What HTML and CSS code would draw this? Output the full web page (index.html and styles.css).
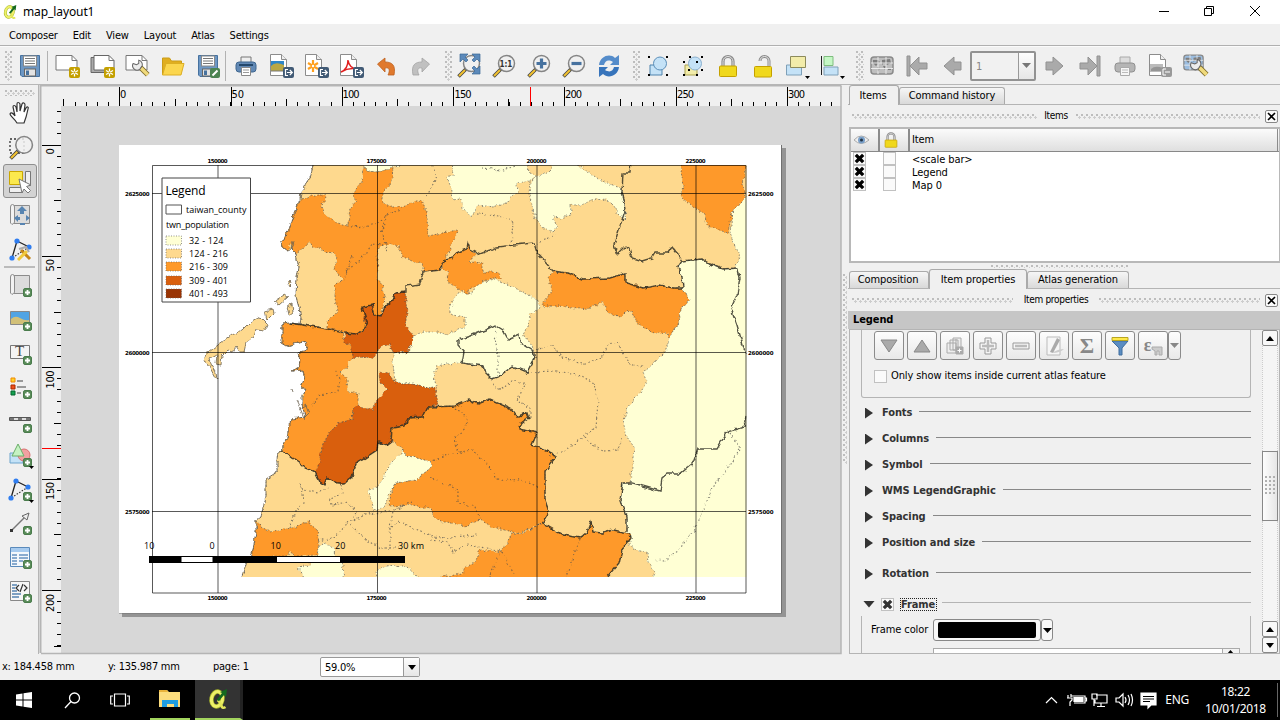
FILE: index.html
```html
<!DOCTYPE html>
<html lang="en">
<head>
<meta charset="utf-8">
<title>map_layout1</title>
<link rel="stylesheet" href="styles.css">
</head>
<body>
<svg class="defs" width="0" height="0">
  <defs>
    <symbol id="plus" viewBox="0 0 9 9"><rect x=".5" y=".5" width="8" height="8" rx="1.5" fill="#5a8c5a" stroke="#4a7c4c"/><path d="M4.5 2v5M2 4.5h5" stroke="#fff" stroke-width="1.8"/></symbol>
    <symbol id="star" viewBox="0 0 11 11"><rect width="11" height="11" rx="2" fill="#c4a000"/><path d="M5.5 1.5v8M2 3.5l7 4M9 3.5l-7 4" stroke="#fff" stroke-width="1.3"/><circle cx="5.500" cy="5.500" r="1" fill="#c4a000"/></symbol>
    <symbol id="export" viewBox="0 0 11 11"><rect width="11" height="11" rx="2" fill="#415a75"/><path d="M5 2.500H2.500v6H5M4 5.500h5M6.800 3l2.500 2.500L6.800 8" fill="none" stroke="#fff" stroke-width="1.200"/></symbol>
    <symbol id="sheet" viewBox="0 0 17 22"><path d="M.5.5h11l5 5v16H.5z" fill="#fff" stroke="#8c8c8c"/><path d="M11.500.5v5h5" fill="#eee" stroke="#8c8c8c"/></symbol>
    <symbol id="floppy" viewBox="0 0 20 22"><path d="M.5.5h19v21H2L.5 20z" fill="#6d97c4" stroke="#47729f"/><rect x="3.500" y="1" width="13" height="10" fill="#fff" stroke="#888"/><path d="M5 3.500h10M5 6h10M5 8.500h10" stroke="#777"/><rect x="4.500" y="14" width="11" height="7" fill="#e3e3e3" stroke="#666"/><rect x="6" y="15.500" width="3" height="4.500" fill="#47729f"/></symbol>
    <symbol id="glass" viewBox="0 0 24 24"><path d="M9 15L1.500 22.500" stroke="#444" stroke-width="3.500"/><path d="M8 16l-6 6" stroke="#f2c230" stroke-width="2"/><circle cx="14.500" cy="9.500" r="8" fill="#f0f0f0" fill-opacity=".85" stroke="#858585" stroke-width="1.500"/></symbol>
    <symbol id="padlock" viewBox="0 0 20 23"><path d="M5 12V7a5 5 0 0110 0v5" fill="none" stroke="#8a8a8a" stroke-width="3.200"/><path d="M5 12V7a5 5 0 0110 0v5" fill="none" stroke="#e2e2e2"/><rect x="1.500" y="11.500" width="17" height="10.500" rx="1" fill="#f0d81c" stroke="#c4a000"/></symbol>
    <symbol id="world" viewBox="0 0 24 19"><rect x="1" y="1" width="22" height="17" rx="3" stroke="#8a8a8a" stroke-width="1.500"/><path d="M3 4h5l2 2-4 4-3-3zM7 11l3 1-2 4zM12 4l8-1 1 4-4 2-3-2-2 2zM13 10l3 0-1 4zM18 12h3v2h-3z" fill="#7d7d7d"/><path d="M8 1v17M16 1v17M1 7h22M1 12.500h22" stroke="#f0f0f0" stroke-width=".9"/></symbol>
    <symbol id="wrench" viewBox="0 0 16 16"><path d="M7 7l7 7" stroke="#7d6b2c" stroke-width="4.500"/><path d="M8 8l6 6" stroke="#f0da7c" stroke-width="3"/><path d="M1 4l3 1 2-1 0-3a4 4 0 013 5l-2 3a4 4 0 01-6-5z" fill="#ececec" stroke="#666" stroke-width=".9"/></symbol>
    <symbol id="nodes" viewBox="0 0 24 24"><path d="M9 4L4 21M9 4l12 6" stroke="#222" stroke-width="1.300"/><path d="M21 10L4 21" stroke="#333" stroke-width="1.200" stroke-dasharray="1.500 1.500"/><g fill="#2f7df0"><circle cx="9" cy="4" r="2.600"/><circle cx="21" cy="10" r="2.600"/><circle cx="4" cy="21" r="2.600"/></g></symbol>
    <symbol id="scroll" viewBox="0 0 20 21"><path d="M4 1.500h15.500v18H4z" fill="#dcdcdc" stroke="#8c8c8c"/><path d="M.5 3q0-2.500 2-2.500t2 2.500v15.500L2 20.500.5 19z" fill="#f2f2f2" stroke="#8c8c8c"/></symbol>
    <symbol id="qgis" viewBox="0 0 20 22"><ellipse cx="9" cy="11" rx="5.500" ry="7.500" transform="rotate(12 9 11)" fill="none" stroke="#a9b82c" stroke-width="4.400"/><ellipse cx="9" cy="11" rx="5.500" ry="7.500" transform="rotate(12 9 11)" fill="none" stroke="#eef06a" stroke-width="3"/><path d="M9.500 12q3 2 4 6 1 3 4 1" fill="none" stroke="#e2e65a" stroke-width="2.600"/><path d="M8.500 12L14 5l-2-1 7-3-1 8-2-2-5 6z" fill="#14691f"/></symbol>
    <symbol id="arrow" viewBox="0 0 20 20"><path d="M.8 7h8V1.500L18 10 8.800 18.500V13h-8z" fill="#aaa" stroke="#8e8e8e"/></symbol>
    <symbol id="cross" viewBox="0 0 12 12"><path d="M2 2l8 8M10 2l-8 8" stroke="currentColor" stroke-width="3.600"/></symbol>
    <filter id="coast" x="0" y="0" width="100%" height="100%"><feTurbulence type="fractalNoise" baseFrequency=".17" numOctaves="2" seed="4"/><feDisplacementMap in="SourceGraphic" scale="5" xChannelSelector="R" yChannelSelector="G"/></filter>
    <clipPath id="mapclip"><rect x="153" y="165" width="593.500" height="412"/></clipPath>
  </defs>
</svg>

<header class="titlebar">
  <svg class="appicon" width="14" height="16" viewBox="0 0 20 22"><use href="#qgis"/></svg>
  <span class="wintitle">map_layout1</span>
  <svg class="winbtns" width="130" height="24" fill="none" stroke="#000"><path d="M1 11.500h10"/><path d="M46.500 8.500h7v7h-7zM48.500 8.500v-2h7v7h-2"/><path d="M92 6l10 10M102 6L92 16"/></svg>
</header>
<nav class="menubar"><span>Composer</span><span>Edit</span><span>View</span><span>Layout</span><span>Atlas</span><span>Settings</span></nav>

<div class="toolbar">
  <i class="grip"></i>
  <b class="tool"><svg width="24" height="24"><use href="#floppy" x="2" y="1" width="20" height="22"/></svg></b>
  <i class="sep"></i>
  <b class="tool"><svg width="26" height="26"><path d="M1 2.500h16l5 5V17H1z" fill="#fff" stroke="#777"/><path d="M17 2.500v5h5" fill="none" stroke="#777"/><use href="#star" x="14" y="14" width="11" height="11"/></svg></b>
  <b class="tool"><svg width="26" height="26"><path d="M1 4.500h15v15H1z" fill="#aaa" stroke="#666"/><path d="M4 2.500h15l5 5V17H4z" fill="#fff" stroke="#666"/><path d="M19 2.500v5h5" fill="none" stroke="#777"/><use href="#star" x="14" y="14" width="11" height="11"/></svg></b>
  <b class="tool"><svg width="26" height="26"><path d="M1 2.500h16l5 5V17H1z" fill="#fff" stroke="#777"/><path d="M17 2.500v5h5" fill="none" stroke="#777"/><use href="#wrench" x="7" y="6" width="18" height="18"/></svg></b>
  <b class="tool"><svg width="24" height="24"><path d="M1.500 21V4h7l2 3h10v4" fill="#e0ae20" stroke="#cb9c17"/><path d="M1.500 21L5 9.500h18L20 21z" fill="#fbd64e" stroke="#dcae22"/></svg></b>
  <b class="tool"><svg width="24" height="24"><use href="#floppy" x="2" y="1" width="20" height="22"/><rect x="14" y="14" width="10" height="10" rx="2" fill="#4c8452"/><path d="M16.500 21.500l5-5" stroke="#fff" stroke-width="2"/></svg></b>
  <i class="sep"></i>
  <b class="tool"><svg width="24" height="24"><path d="M7 3h10v7H7z" fill="#eee" stroke="#777"/><rect x="2" y="8" width="20" height="10" rx="3" fill="#6289b5" stroke="#3f668f"/><path d="M5 11h14" stroke="#24486c" stroke-width="2"/><path d="M7.500 13.500h9v8h-9z" fill="#fff" stroke="#888"/><path d="M9 16h6M9 18.500h6" stroke="#999"/></svg></b>
  <b class="tool"><svg width="26" height="26"><use href="#sheet" x="2" y="1" width="17" height="22"/><path d="M3 8h13v7H3z" fill="#2d86c8"/><path d="M3 13q4-5 13-1v6H3z" fill="#b9a743"/><path d="M3 18h13" stroke="#777"/><use href="#export" x="15" y="14" width="11" height="11"/></svg></b>
  <b class="tool"><svg width="26" height="26"><use href="#sheet" x="2" y="1" width="17" height="22"/><path d="M10 7v12M5 10l10 6M15 10L5 16" stroke="#ffa01e" stroke-width="2.200"/><circle cx="10" cy="13" r="1.200" fill="#fff"/><use href="#export" x="15" y="14" width="11" height="11"/></svg></b>
  <b class="tool"><svg width="26" height="26"><use href="#sheet" x="2" y="1" width="17" height="22"/><path d="M3 19Q10 16 10 7q1 8 9 9-8-2-16 3z" fill="none" stroke="#e02020" stroke-width="1.500"/><use href="#export" x="15" y="14" width="11" height="11"/></svg></b>
  <b class="tool"><svg width="24" height="24"><path d="M3.500 10L11 4v4c7 0 11 3 9 13h-6c2-4 2-8-3-7v4z" fill="#e0792d" stroke="#bd611e" stroke-width=".8"/></svg></b>
  <b class="tool"><svg width="24" height="24"><path d="M20.500 10L13 4v4C6 8 2 11 4 21h6c-2-4-2-8 3-7v4z" fill="#c0c0c0" stroke="#a2a2a2" stroke-width=".8"/></svg></b>
  <i class="grip g2"></i>
  <b class="tool"><svg width="26" height="26"><use href="#glass" x="1" y="1" width="24" height="24"/><path d="M4 1h8l-3 3 3 3-2 2-3-3-3 3zM24 1v8l-3-3-3 3-2-2 3-3-3-3zM24 21h-8l3-3-3-3 2-2 3 3 3-3z" fill="#5c8abb" stroke="#3a6797" stroke-width=".7"/></svg></b>
  <b class="tool"><svg width="24" height="24"><use href="#glass" width="24" height="24"/><text class="one" x="7.500" y="13">1:1</text></svg></b>
  <b class="tool"><svg width="24" height="24"><use href="#glass" width="24" height="24"/><path d="M14.500 4.500v10M9.500 9.500h10" stroke="#47729f" stroke-width="3.200"/></svg></b>
  <b class="tool"><svg width="24" height="24"><use href="#glass" width="24" height="24"/><path d="M9.500 9.500h10" stroke="#47729f" stroke-width="3.200"/></svg></b>
  <b class="tool"><svg width="24" height="24"><path d="M2 11C3 2 13-1 18 4l4-3v10H13l3-3C11 5 8 7 7 11z" fill="#558cca"/><path d="M22 13c-1 9-11 12-16 7l-4 3V13h9l-3 3c5 3 8 1 9-3z" fill="#3774bb"/></svg></b>
  <i class="grip g3"></i>
  <b class="tool"><svg width="24" height="24"><path d="M4 11h12v10H4z" fill="#c4e2f7" stroke="#4f83ad"/><circle cx="14" cy="9.500" r="6.500" fill="#c4e2f7" stroke="#5b8fb9"/><path d="M2 2h2v2H2zM20 2h2v2h-2zM2 20h2v2H2zM20 20h2v2h-2z"/></svg></b>
  <b class="tool"><svg width="24" height="24"><path d="M4 11h12v10H4z" fill="#f2ecaa" stroke="#aaa24e"/><circle cx="14" cy="9.500" r="6.500" fill="#c4e2f7" stroke="#8ab0cf"/><path d="M2 7h2v2H2zM8 2h2v2H8zM20 2h2v2h-2zM2 20h2v2H2zM15 20h2v2h-2zM20 15h2v2h-2zM7 15h2v2H7zM15 7h2v2h-2z"/></svg></b>
  <b class="tool"><svg width="24" height="24"><use href="#padlock" x="2" y="0" width="20" height="24"/></svg></b>
  <b class="tool"><svg width="24" height="24"><path d="M9 7a4.500 4.500 0 019 0v5" fill="none" stroke="#8a8a8a" stroke-width="3"/><path d="M9 7a4.500 4.500 0 019 0v5" fill="none" stroke="#e8e8e8"/><rect x="3.500" y="12.500" width="17" height="10.500" rx="1" fill="#f0d81c" stroke="#c4a000"/></svg></b>
  <b class="tool"><svg width="26" height="26"><path d="M1.500 12h15v10h-15z" fill="#c4e2f7" stroke="#7ea0b8"/><path d="M5.500 3.500h15v11h-15z" fill="#f2ecaa" stroke="#8c8a5b"/><path d="M20 23h5l-2.500 3z"/></svg></b>
  <b class="tool"><svg width="26" height="26"><path d="M1.500 3v19" stroke="#222"/><path d="M4 3.500h9v9H4z" fill="#c5f7c5" stroke="#7fbd7f"/><path d="M4 14h14v8H4z" fill="#c4e2f7" stroke="#7ea0b8"/><path d="M20 23h5l-2.500 3z"/></svg></b>
  <i class="grip g4"></i>
  <b class="tool"><svg width="24" height="24" fill="#bebebe"><use href="#world" y="2" width="24" height="19"/></svg></b>
  <b class="tool"><svg width="24" height="24"><path d="M2 2h3v20H2z" fill="#aaa" stroke="#919191"/><path d="M22 9h-8V3L5 12l9 9v-6h8z" fill="#aaa" stroke="#919191"/></svg></b>
  <b class="tool"><svg width="24" height="24"><path d="M21 8h-7V3L4 12l10 9v-5h7z" fill="#aaa" stroke="#919191"/></svg></b>
  <div class="combo pagecombo"><span>1</span><i><svg width="9" height="5"><path d="M0 0h9L4.500 5z" fill="#777"/></svg></i></div>
  <b class="tool"><svg width="24" height="24"><path d="M3 8h7V3l10 9-10 9v-5H3z" fill="#aaa" stroke="#919191"/></svg></b>
  <b class="tool"><svg width="24" height="24"><path d="M19 2h3v20h-3z" fill="#aaa" stroke="#919191"/><path d="M2 9h8V3l9 9-9 9v-6H2z" fill="#aaa" stroke="#919191"/></svg></b>
  <b class="tool"><svg width="24" height="24"><path d="M7 3h10v7H7z" fill="#ddd" stroke="#aaa"/><rect x="2" y="9" width="20" height="9" rx="3" fill="#b5b5b5" stroke="#909090"/><path d="M7.500 13.500h9v8h-9z" fill="#f6f6f6" stroke="#aaa"/><path d="M9 16h6M9 18.500h6" stroke="#bbb"/></svg></b>
  <b class="tool"><svg width="26" height="26"><use href="#sheet" x="2" y="1" width="17" height="22"/><path d="M3 11h13v8H3z" fill="#bbb"/><path d="M4 16q4-4 12-1v3H4z" fill="#959595"/><rect x="14" y="14" width="11" height="10" rx="2" fill="#999"/><path d="M19 16h-3v6h3M18 19h5" fill="none" stroke="#fff"/></svg></b>
  <b class="tool"><svg width="26" height="26" fill="#9bbde0"><use href="#world" x="1" y="1" width="21" height="17"/><use href="#wrench" x="8" y="5" width="19" height="19"/></svg></b>
</div>

<main class="work">
  <aside class="tools">
    <i class="hgrip"></i>
    <b><svg width="24" height="24"><path d="M9 22c-3-5-7-7-7-9 1-2 3-1 5 2L5 6c0-2 2-2 3 0l1 5V3c0-2 2-2 3 0v7l2-7c1-2 3-1 3 1l-1 7 2-4c1-2 3-1 2 1-1 5-2 9-4 14z" fill="#fff" stroke="#333" stroke-width="1.200"/></svg></b>
    <b><svg width="25" height="25"><path d="M2 4h14v14H2z" fill="none" stroke="#333" stroke-width="1.300" stroke-dasharray="2 2"/><use href="#glass" x="1" y="0" width="25" height="25"/></svg></b>
    <b class="on"><svg width="26" height="26"><path d="M18.500 3.500h5v14h-5zM2.500 19.500h13v5h-13z" fill="#f0f0f0" stroke="#777"/><path d="M2.500 3.500h13v13h-13z" fill="#fbe94e" stroke="#caa700"/><path d="M12 11l12 6-4.500 1.500 4 4-2.500 2.500-4-4-2 4z" fill="#fff" stroke="#777"/></svg></b>
    <b><svg width="24" height="24"><use href="#scroll" x="2" y="1" width="20" height="21"/><path d="M14 3l5 5h-3v3h-4V8H9zM6 15l4-3v2h2v3h-2v2zM22 15l-4-3v6zM12 20h5v2h-5z" fill="#5784b1"/></svg></b>
    <b><svg width="25" height="25"><use href="#nodes" width="24" height="24"/><path d="M13 13l9 9" stroke="#c58619" stroke-width="3"/><path d="M19 14l-9 9" stroke="#f0c93c" stroke-width="3"/><path d="M11 12l7-2 3 5" fill="none" stroke="#aaa" stroke-width="2"/></svg></b>
    <i class="hsep"></i>
    <b><svg width="26" height="26"><use href="#scroll" x="3" y="1" width="20" height="21"/><use href="#plus" x="16" y="15" width="9" height="9"/></svg></b>
    <b><svg width="26" height="26"><path d="M3.500 4.500h19v13h-19z" fill="#51a4e4" stroke="#888"/><path d="M4 12q4-4 9-1t9 2v4H4z" fill="#d2c078"/><use href="#plus" x="16" y="15" width="9" height="9"/></svg></b>
    <b><svg width="26" height="26"><path d="M3.500 4.500h19v13h-19z" fill="#f4f4f4" stroke="#777"/><text class="tee" x="8" y="15">T</text><use href="#plus" x="16" y="15" width="9" height="9"/></svg></b>
    <b><svg width="26" height="26"><path d="M4 3h4v4H4z" fill="#ffd32a" stroke="#f08a00"/><path d="M4 10h4v4H4z" fill="#f0511c" stroke="#a92b00"/><path d="M4 16h4v4H4z" fill="#12a050" stroke="#05652d"/><path d="M10 6h6M10 12h9M10 18h4" stroke="#999" stroke-width="2"/><use href="#plus" x="16" y="15" width="9" height="9"/></svg></b>
    <b><svg width="26" height="26"><path d="M2.500 8.500h21v3h-21z" fill="#ddd" stroke="#555"/><path d="M3 10h4M11 10h4M19 10h4" stroke="#777" stroke-width="2"/><use href="#plus" x="16" y="15" width="9" height="9"/></svg></b>
    <b><svg width="28" height="26"><path d="M4 10h13v10H4z" fill="#c4e2f7" stroke="#6da4cc"/><circle cx="18" cy="12" r="6" fill="#f2a1a1" stroke="#d97070"/><path d="M12 1l6 12H6z" fill="#c5f2c2" stroke="#6aae69"/><use href="#plus" x="17" y="15" width="9" height="9"/><path d="M23 23h5l-2.500 3z"/></svg></b>
    <b><svg width="28" height="26"><use href="#nodes" x="1" width="24" height="24"/><use href="#plus" x="17" y="15" width="9" height="9"/><path d="M23 23h5l-2.500 3z"/></svg></b>
    <b><svg width="26" height="26"><path d="M4 20L21 3" stroke="#777" stroke-width="1.400"/><path d="M22 2l-2 7-5-4z" fill="#eee" stroke="#666"/><path d="M3 18h3v3H3z" fill="#333"/><use href="#plus" x="16" y="15" width="9" height="9"/></svg></b>
    <b><svg width="26" height="26"><path d="M3.500 2.500h19v19h-19z" fill="#f4f8fc" stroke="#5a8abb"/><path d="M4 3h18v4H4z" fill="#a7cbef"/><path d="M5 10h5M12 10h9M5 13h5M12 13h9M5 16h5M12 16h4M5 19h5" stroke="#6591c0" stroke-width="1.400"/><use href="#plus" x="16" y="15" width="9" height="9"/></svg></b>
    <b><svg width="26" height="26"><path d="M3.500 2.500h19v19h-19z" fill="#f7f7f7" stroke="#888"/><path d="M5 6h5M5 9h3M5 12h5M5 15h9M5 18h7" stroke="#5784b1" stroke-width="1.600"/><path d="M12 6L9 9l3 3M17 6l3 3-3 3M16 5l-3 8" fill="none" stroke="#333" stroke-width="1.200"/><use href="#plus" x="16" y="15" width="9" height="9"/></svg></b>
  </aside>

  <section class="canvas">
    <!-- rulers, page and map share window coordinates -->
    <svg width="802" height="569" viewBox="40 85 802 569">
      <rect x="40" y="85" width="802" height="569" fill="#f0f0f0"/>
      <rect x="61" y="106" width="780" height="547" fill="#d7d7d7"/>
      <g stroke="#000" shape-rendering="crispEdges" fill="none">
        <path d="M63.400 104H840" stroke-width="4" stroke-dasharray="1 10.130"/>
        <path d="M119.500 87v19M231.500 87v19M342.500 87v19M453.500 87v19M564.500 87v19M676.500 87v19M787.500 87v19M63.500 99v7M175.500 99v7M286.500 99v7M397.500 99v7M508.500 99v7M620.500 99v7M731.500 99v7"/>
        <path d="M59 111.200V653" stroke-width="4" stroke-dasharray="1 10.130"/>
        <path d="M42 145.500h19M42 256.500h19M42 367.500h19M42 479.500h19M42 590.500h19M54 200.500h7M54 312.500h7M54 423.500h7M54 534.500h7M54 646.500h7"/>
      </g>
      <rect x="530" y="87" width="1" height="19" fill="#f00"/><rect x="42" y="448" width="19" height="1" fill="#f00"/>
      <g class="rule">
        <text x="120" y="98">0</text><text x="231.500" y="98">50</text><text x="342.500" y="98" textLength="17">100</text><text x="454.500" y="98" textLength="17">150</text><text x="565" y="98" textLength="17">200</text><text x="677" y="98" textLength="17">250</text><text x="788" y="98" textLength="17">300</text>
        <text transform="translate(53.500 154.500) rotate(-90)">0</text><text transform="translate(53.500 271.500) rotate(-90)">50</text><text transform="translate(53.500 388.500) rotate(-90)" textLength="18">100</text><text transform="translate(53.500 500) rotate(-90)" textLength="18">150</text><text transform="translate(53.500 612) rotate(-90)" textLength="18">200</text>
      </g>
      <path d="M122 148h664v469H122z" fill="#949494"/>
      <path d="M119 145h663v468.500H119z" fill="#707070"/>
      <path d="M119 145h662v468H119z" fill="#fff"/>

      <g clip-path="url(#mapclip)"><g filter="url(#coast)">
        <rect x="119" y="145" width="660" height="460" fill="none"/>
        <g class="area" stroke="#4d4d4d">
        <path fill="#fed98e" d="M313 155V165L311 175 305 187 301 192 300 200 296 208 292 220 287 233 285 239 281 242 282 247 287 251 291 250 292 242 294 242 292 249 296 253 297 260 299 267 297 278 296 295 299 308 301 318 300 324 290 323 282 324V343L287 346 302 342 307 343 306 350 298 353 300 360 299 367 292 371 303 370 304 375 301 385 305 390 302 395 302 403 304 412 305 417 291 419 290 425 287 437 281 450 278 453 277 460 277 472 266 479V497L263 508 261 517 256 521V533L253 550 249 558 245 567 242 577 238 590H760V155z"/>
        <path fill="#fe9929" d="M301 200L312 195 325 195 326 198 321 207 327 216 337 223 348 225 350 208 357 202 353 193 362 182 363 167 367 171 378 172 393 168 392 178 387 188 382 195V203L393 207H403L413 202 422 200 425 208 427 218 428 236 457 230 455 238 448 252 445 260 440 270 423 272V265L403 257 400 247 390 243 378 247 377 258 378 272 377 280 383 285 383 292 385 300 380 316 375 315 372 305 362 307 367 322 365 328 357 334 345 333 335 329 327 328V322L337 312 335 298V285L343 280 335 270 337 255 328 252 313 247 310 242 307 245 296 253 292 249V241L287 251 282 247 281 242 285 239 292 220 296 208z"/>
        <path fill="#fe9929" d="M282 324L290 323 312 326 323 328 335 329 342 333 345 342 352 347V358L347 367 341 372 347 380 348 392 358 393V405L353 410 352 420 338 423 328 435 322 447 320 462 315 472 305 468 300 463 282 451 287 437 290 425 291 419 305 417 302 403 305 390 301 385 304 375 303 370 292 371 299 367 300 360 298 353 306 350 307 343 302 342 287 346 282 343z"/>
        <path fill="#d95f0e" d="M362 307L372 305 375 315 381 316 385 307 393 300 395 293 405 292 406 302 407 312 405 327 415 335 413 343 407 353 393 352 390 345 380 346 377 353 372 358 362 356 352 359V353L350 345 344 342 345 333 358 334 366 328z"/>
        <path fill="#ffffd4" d="M415 335L423 332H443L447 335 460 328H465V317L452 315 450 308 455 297 458 293 473 292 477 283 495 280 503 282 517 289 535 298 540 308 530 315 528 325 523 335 532 345 535 357 527 372 513 366 498 377 492 379 485 372 483 366 462 363 447 364 437 366 434 375 436 387 428 388 412 383H395L393 363V352L408 353 412 343z"/>
        <path fill="#d95f0e" d="M379 373L390 374 395 383H412L428 388 435 387 436 398 438 405 428 407 423 417 408 418 405 426 392 428 391 442 387 445 378 442 377 450 365 458 357 463 352 477 345 483H338L327 478 325 485 320 482 315 472 320 462 322 447 328 435 338 423 352 420 353 410 358 405 363 407 372 410 377 400 387 390 380 383z"/>
        <path fill="#fe9929" d="M428 407L455 406 470 400 478 404 490 399 510 408 517 417 527 412 529 418 520 425 519 429 537 433 532 445 552 453 555 458 545 471V500L549 512 542 523 520 533 512 532 493 527 480 520 465 526 447 522 442 522 433 517 430 508 412 505 388 506 395 483 415 480 428 470 433 465 431 462 405 455 400 447 390 438 392 428 405 426 408 418 423 417z"/>
        <path fill="#ffffd4" d="M403 450L400 455 392 463 385 473 378 487 368 489 372 502 375 511 385 507 388 497 395 483 415 480 428 470 433 465 428 461 405 455z"/>
        <path fill="#fe9929" d="M468 244L470 249 475 253 470 262 483 263V272H495L502 278 487 280 477 285 468 290 470 294 460 290 448 282 447 272 442 268 445 260 453 258 458 252 467 249z"/>
        <path fill="#fe9929" d="M553 272L567 273 583 279 610 278 626 273V283L637 285 643 288 660 285 673 288H683L690 300 682 307 677 325 669 339 667 332 653 333 637 322 631 310 620 317 608 312 603 302 587 308 577 309 560 306 542 306 552 290 548 277z"/>
        <path fill="#ffffd4" d="M452 160L453 175 447 177 450 185 452 198 462 200 463 208 471 217 478 205 493 207 507 203 510 197 518 193 517 183 530 181 537 176 529 173 527 160z"/>
        <path fill="#ffffd4" d="M552 160L551 168 548 173 537 176 530 182 529 195 532 205 535 218 542 227 553 232 557 227 553 217 560 218 572 215 570 205H582L590 200 607 199 613 205 618 213 625 220 626 208 623 195 622 188 610 185 597 178 588 172 578 165V160z"/>
        <path fill="#ffffd4" d="M363 160V166L367 171 378 172 393 168 400 165V160z"/>
        <path fill="#fe9929" d="M681 160V170L683 185 681 197 690 205 705 215 707 226 728 233 732 212 745 198 743 185 746 160z"/>
        <path fill="#ffffd4" d="M760 190L745 198 732 212 731 225 730 233 733 242 740 257 735 268 723 269 710 264 702 259 682 261 678 267 682 278 683 288 690 300 682 307 677 325 669 339 665 352 655 362 643 373 647 382 640 393 630 403 623 420 627 437 634 447 632 467 630 483 623 483 620 500 627 517 627 532 631 537 629 545 633 550 647 552 648 563 654 571 650 590H760z"/>
        <path fill="#fe9929" d="M542 523L563 535 580 538 587 532 591 522 593 532 603 533 613 530 630 533 631 538 622 550 619 563 607 577 600 590H438L440 577 462 574 465 567 475 563 480 550 502 552 512 533 522 534z"/>
        <path fill="#fe9929" d="M257 521L262 528 272 531 292 528 308 522 317 530 319 543 317 555 297 556 290 552 285 556 250 557 254 547 256 533z"/>
        <path fill="#ffffd4" d="M325 543L333 547 335 555 344 565 342 590H303V577L298 568 317 562 318 547z"/>
        <path fill="#ffffd4" d="M374 590L378 568 395 566 408 568 418 577V590z"/>
        </g>
        <g class="isle">
        <path fill="#fed98e" d="M205 355L203 360 208 364 217 381 216 372 211 364 210 358 217 354 216 364 221 365 222 356 228 350 233 352 236 346 240 352 244 352 246 343 254 337 256 330 264 331 267 324 260 317 251 322 243 330 232 335 218 345zM265 311l8-2 1 4-7 7zM274 302l11-7 3 2-9 8zM287 306l5-2 1 8-4 3zM288 284l2-3 1 3-2 2z"/>
        <path fill="none" d="M313 155V165L311 175 305 187 301 192 300 200 296 208 292 220 287 233 285 239 281 242 282 247 287 251 291 250 292 242 294 242 292 249 296 253 297 260 299 267 297 278 296 295 299 308 301 318 300 324 290 323 282 324V343L287 346 302 342 307 343 306 350 298 353 300 360 299 367 292 371 303 370 304 375 301 385 305 390 302 395 302 403 304 412 305 417 291 419 290 425 287 437 281 450 278 453 277 460 277 472 266 479V497L263 508 261 517 256 521V533L253 550 249 558 245 567 242 577M296 400l4 8 5 12M298 410l8-5 3 8-5 5M292 389l1 3"/>
        </g>
        <g class="sub">
        <path d="M347 225L362 228 377 223 390 213 402 210M352 257L344 280M346 271L363 258 372 244 383 245"/>
        <path d="M335 371L340 382 338 391 320 395 312 405M300 484L303 490 318 493 330 487M341 485l2 8-14 5 4 7 15-3 8 10-5 13 15 15 14 8h25M290 528l5-16 8-9-2-18M318 541l18-4 12-15 20-8 22-3 22-9M390 550v-22l10-6 18 8 20 8 40-3M389 533l4-22 12-6"/>
        <path d="M432 166l5 10-10 20M482 168l20 2 14-4M477 214l22 2 14 6-2 24M537 244l18-9M386 215l-4 15 6 22M536 350l16-5 10 12 20 7 20-6 6-14 10-2 6 12 6 10 15 4M491 380l2 5 8 5 12-10 12 4-8 17 13 7v10M497 333l-2 6 3 16v20M527 372l30-1 25 5 12 8 4 18-2 25-10 8-22 16-15 5M585 437l7 8 12 6 14-1 4-13M455 408l10 7 3 10-14 15 6 12 12-2 18 17 7 12 24 1 18 7M430 462l20-8 15-1M430 478l20 8 8 4v12l17 5 6 14M542 523l-22 11M580 539l-13 38M500 550l-10 27M502 552l14 26M430 540l18 2 5 10 14-7 31 5M730 433l10 15-15 24-12 14-10 25-10 20-15 20-14 10-8-1"/>
        </g>
        <g class="county">
        <path d="M631 160L630 173 623 173 622 192 626 208 618 232 614 245 617 254 625 246 629 248 632 258 642 261 652 258 655 253H668L672 247 677 253 682 261 702 259 710 264 723 269 738 268 740 278 737 295 731 308 737 325 742 342 746 355M682 261L678 267 682 278 683 288 673 288 660 285 643 288 626 283V273L610 278 583 279 567 273 553 271 537 253 534 243 523 244 497 247 490 250 480 254 470 249 468 244 467 249 458 252 453 258 445 260 440 270 423 272 420 284 406 286V292L395 293 393 300 385 307 381 316 375 315 372 305 362 307 367 322 365 328 357 334 345 333 323 328 290 323"/>
        <path d="M458 340L470 336 485 330 495 325 503 330 508 339 519 334 520 342 532 350 535 357 527 372 513 366 498 377 492 379 485 372 483 366 462 363 464 352 458 345z"/>
        <path d="M281 450L300 463 305 468 315 472 320 482 325 485 327 478 338 483H345L352 477 357 463 365 458 377 450 378 442 387 445 391 442 392 428 405 426 408 418 423 417 428 407 455 406 470 400 478 404 490 399 510 408 517 417 527 412 529 418 520 425 519 429 537 433 532 445 552 453 555 458 545 471V500L549 512 542 523 563 535 580 538 587 532 591 522 593 532 603 533 613 530 630 533 631 538 622 550 619 563 607 577M627 531V517L620 500 623 483 632 483 660 491 662 478 667 474H680L693 463 698 449H717L727 432 744 427 746 416"/>
        </g>
      </g></g>

      <g fill="none" stroke="#000" stroke-opacity=".65">
        <path d="M152.500 165.500h593.500V593H152.500zM218 165v428M377.500 165v428M537 165v428M696 165v428M152 193.500h594M152 352.500h594M152 511.500h594"/>
      </g>
      <g class="grid">
        <text x="207.500" y="163" textLength="20">150000</text><text x="366.500" y="163" textLength="20">175000</text><text x="526.500" y="163" textLength="20">200000</text><text x="685.500" y="163" textLength="20">225000</text>
        <text x="207.500" y="600" textLength="20">150000</text><text x="366.500" y="600" textLength="20">175000</text><text x="526.500" y="600" textLength="20">200000</text><text x="685.500" y="600" textLength="20">225000</text>
        <text x="125" y="195.500" textLength="24.500">2625000</text><text x="125" y="354.500" textLength="24.500">2600000</text><text x="125" y="513.500" textLength="24.500">2575000</text>
        <text x="748" y="195.500" textLength="25.500">2625000</text><text x="748" y="354.500" textLength="25.500">2600000</text><text x="748" y="513.500" textLength="25.500">2575000</text>
      </g>
      <path d="M162 178h88.500v124H162z" fill="#fff" stroke="#444"/>
      <g class="leg">
        <text class="big" x="165.500" y="194.500" textLength="40">Legend</text>
        <text x="186" y="213" textLength="60.500">taiwan_county</text>
        <text x="166" y="228" textLength="63">twn_population</text>
        <text x="189" y="244" textLength="34.500">32 - 124</text><text x="189" y="257" textLength="39">124 - 216</text><text x="189" y="270" textLength="39">216 - 309</text><text x="189" y="284" textLength="39">309 - 401</text><text x="189" y="297" textLength="39">401 - 493</text>
      </g>
      <path d="M166 205h15.500v9H166z" fill="#fff" stroke="#555"/>
      <g stroke="#666" stroke-width=".7" stroke-dasharray="1 1.500"><path fill="#ffffd4" d="M166 236h15.500v9H166z"/><path fill="#fed98e" d="M166 249h15.500v9H166z"/><path fill="#fe9929" d="M166 262h15.500v9H166z"/><path fill="#d95f0e" d="M166 276h15.500v9H166z"/><path fill="#993404" d="M166 289h15.500v9H166z"/></g>
      <path d="M149 556h256v7H149z"/><path d="M181.500 557h31v5h-31zM277 557h63v5h-63z" fill="#fff"/>
      <g class="scale"><text x="144" y="549">10</text><text x="209.500" y="549">0</text><text x="270.500" y="549">10</text><text x="335" y="549">20</text><text x="398" y="549" textLength="26">30 km</text></g>
      <path d="M40.500 653V85.500h801" fill="none" stroke="#b5b5b5" stroke-width="2"/><path d="M841 86v567.500H41" fill="none" stroke="#b5b5b5" stroke-width="1.500"/>
    </svg>
  </section>
  <i class="vsplit"></i>

  <section class="dock">
    <div class="tabs top"><span class="tab cur t1">Items</span><span class="tab t2">Command history</span></div>
    <div class="dockhead"><i></i><span>Items</span><i></i><button><svg width="9" height="9"><path d="M1 1l7 7M8 1L1 8" stroke="#000" stroke-width="1.600"/></svg></button></div>
    <div class="tree">
      <div class="thead"><span class="c1"><svg width="15" height="12"><path d="M0 6q7-8 15 0-8 7-15 0z" fill="#eee" stroke="#aaa"/><circle cx="7.500" cy="6" r="3.500" fill="#7aa0c9"/><circle cx="7.500" cy="6" r="1.500" fill="#234"/></svg></span><span class="c1"><svg width="14" height="16"><use href="#padlock" width="14" height="16"/></svg></span><span class="c3">Item</span></div>
      <div class="trow"><i class="cb"><svg width="11" height="11"><use href="#cross" width="11" height="11"/></svg></i><i class="cb k2"></i><span>&lt;scale bar&gt;</span></div>
      <div class="trow"><i class="cb"><svg width="11" height="11"><use href="#cross" width="11" height="11"/></svg></i><i class="cb k2"></i><span>Legend</span></div>
      <div class="trow"><i class="cb"><svg width="11" height="11"><use href="#cross" width="11" height="11"/></svg></i><i class="cb k2"></i><span>Map 0</span></div>
    </div>
    <div class="hsplit"><i></i></div>
    <div class="tabs low"><span class="tab t3">Composition</span><span class="tab cur t4">Item properties</span><span class="tab t5">Atlas generation</span></div>
    <div class="dockhead second"><i></i><span>Item properties</span><i></i><button><svg width="9" height="9"><path d="M1 1l7 7M8 1L1 8" stroke="#000" stroke-width="1.600"/></svg></button></div>
    <div class="sect">Legend</div>
    <div class="scroll">
      <div class="props">
        <div class="group">
          <div class="btns">
            <b><svg width="20" height="20"><path d="M2 4h16l-8 12z" fill="#aaa" stroke="#888"/></svg></b>
            <b><svg width="20" height="20"><path d="M2 16h16L10 4z" fill="#aaa" stroke="#888"/></svg></b>
            <b><svg width="20" height="20" fill="#eee" stroke="#aaa"><path d="M2 7h9v10H2zM5 4h8v10H5zM8 2h8v12H8zM11 3v10"/><path d="M11 11h7v7h-7z" fill="#aaa"/><path d="M14.500 12.500v4M12.500 14.500h4" stroke="#fff"/></svg></b>
            <b><svg width="20" height="20"><path d="M7 2h6v5h5v6h-5v5H7v-5H2V7h5z" fill="#f6f6f6" stroke="#999"/><path d="M10 4v12M4 10h12" stroke="#bbb" stroke-width="2.500"/></svg></b>
            <b><svg width="20" height="20"><path d="M2 7h16v6H2z" fill="#f6f6f6" stroke="#999"/><path d="M4 10h12" stroke="#bbb" stroke-width="2.500"/></svg></b>
            <b><svg width="20" height="20"><path d="M3 1h13v18H3z" fill="#f6f6f6" stroke="#bbb"/><path d="M6 16L13 2l3 2-7 13z" fill="#aaa"/><path d="M8 17q6-4 12-4-4 4-12 4z" fill="#ccc"/></svg></b>
            <b class="sigma">Σ</b>
            <b><svg width="20" height="20"><path d="M2 5h16l-6 7v7H9v-7z" fill="#5b8dc2" stroke="#3e6d9d"/><path d="M2 1.500h16v3H2z" fill="#ffe94a" stroke="#b9a620"/></svg></b>
            <b class="eps"><span>ε</span><svg width="10" height="10"><path d="M0 1h10v8H7V5H5v4H3V5L0 3z" fill="#ccc" stroke="#aaa"/></svg></b><b class="drop"><svg width="9" height="5"><path d="M0 0h9L4.500 5z" fill="#888"/></svg></b>
          </div>
          <label class="only"><i class="cb"></i>Only show items inside current atlas feature</label>
        </div>
        <div class="fold"><em></em><span>Fonts</span><u></u></div>
        <div class="fold"><em></em><span>Columns</span><u></u></div>
        <div class="fold"><em></em><span>Symbol</span><u></u></div>
        <div class="fold"><em></em><span>WMS LegendGraphic</span><u></u></div>
        <div class="fold"><em></em><span>Spacing</span><u></u></div>
        <div class="fold"><em></em><span>Position and size</span><u></u></div>
        <div class="fold rot"><em></em><span>Rotation</span><u></u></div>
        <div class="fold frame"><em class="open"></em><i class="cb"><svg width="11" height="11"><use href="#cross" width="11" height="11"/></svg></i><span class="focus">Frame</span><u></u></div>
        <div class="framebox">
          <div class="frow"><span>Frame color</span><div class="swatch"><i></i></div><b class="drop"><svg width="9" height="5"><path d="M0 0h9L4.500 5z"/></svg></b></div>
          <div class="spin"><i><svg width="7" height="4"><path d="M0 4h7L3.500 0z"/></svg></i></div>
        </div>
      </div>
      <div class="bar"><b class="sb"><svg width="8" height="5"><path d="M0 5h8L4 0z"/></svg></b><div class="track"></div><div class="thumb"><i></i></div><div class="track t"></div><b class="sb"><svg width="8" height="5"><path d="M0 5h8L4 0z"/></svg></b><b class="sb"><svg width="8" height="5"><path d="M0 0h8L4 5z"/></svg></b></div>
    </div>
  </section>
</main>

<footer class="status"><span class="s1">x: 184.458 mm</span><span class="s2">y: 135.987 mm</span><span class="s3">page: 1</span><div class="combo zoomcombo"><span>59.0%</span><i><svg width="8" height="5"><path d="M0 0h8L4 5z"/></svg></i></div></footer>

<div class="taskbar">
  <b class="tb"><svg width="16" height="16" fill="#fff"><path d="M0 2.500L6.500 1.500v6H0zM7.500 1.300L16 0v7.500H7.500zM0 8.500h6.500v6L0 13.500zM7.500 8.500H16V16l-8.500-1.300z"/></svg></b>
  <b class="tb"><svg width="17" height="17" fill="none" stroke="#fff" stroke-width="1.300"><circle cx="10.500" cy="6" r="5"/><path d="M7 9.500L1 16"/></svg></b>
  <b class="tb"><svg width="20" height="15" fill="none" stroke="#fff" stroke-width="1.200"><path d="M4.500 1h11v12h-11zM3 3H.7v8H3M17 3h2.300v8H17"/></svg></b>
  <b class="tb files"><svg width="22" height="20"><path d="M0 1h8l2 2h11v15H0z" fill="#fbdc7d"/><path d="M0 1h8l1 2H0z" fill="#e8b23a"/><path d="M3 18v-7h16v7h-4v-3H8v3z" fill="#1e9de0"/></svg></b>
  <b class="tb app"><svg width="20" height="22"><use href="#qgis" width="20" height="22"/></svg></b>
  <div class="tray">
    <svg width="112" height="20" viewBox="0 0 112 20" fill="none" stroke="#fff" stroke-width="1.200"><path d="M1 13l5.500-5.500L12 13M26 6h14v7H29M40 8h1.500v3H40M23 5v3M26 4v3M22 8h5v2l-2 2v4"/><path d="M29 7.500h9v4h-9z" fill="#fff"/><path d="M51 5h11v8H50v-3M47 4h5v5h-5zM49 9v7M56 13v3M52 16.500h8"/><path d="M71 8h3l4-4v12l-4-4h-3zM80 7q2 3 0 6M83 5q3 5 0 10M86 4q3 6 0 12"/><path d="M96 3h15v12h-5l-3 3v-3h-7z" fill="#fff"/><path d="M98 6.500h11M98 9h11M98 11.500h7" stroke="#000"/></svg>
    <span class="lang">ENG</span>
    <span class="clock">18:22<br>10/01/2018</span>
  </div>
</div>
</body>
</html>
```
FILE: styles.css
```css
* { box-sizing: border-box; }
html, body { margin: 0; height: 100%; }
body { width: 1280px; height: 720px; overflow: hidden; display: flex; flex-direction: column; background: #f0f0f0; color: #000; font: 11px/14px "DejaVu Sans Condensed", "DejaVu Sans", sans-serif; font-stretch: condensed; letter-spacing: -.1px; }
i, em, u { font-style: normal; text-decoration: none; }
svg { display: block; overflow: visible; flex: none; }
.defs { position: absolute; }
.titlebar { height: 24px; flex: none; background: #fff; display: flex; align-items: center; padding-left: 3px; }
.wintitle { font: 12px/20px "Noto Sans", sans-serif; letter-spacing: -.1px; margin-left: 6px; flex: 1; }
.winbtns { margin-right: -8px; }
.menubar { height: 22px; flex: none; display: flex; gap: 15px; padding: 5px 0 0 9px; border-bottom: 1px solid #b0b0b0; letter-spacing: -.2px; }
.toolbar { height: 39px; flex: none; display: flex; align-items: center; padding-left: 5px; border-bottom: 1px solid #b7b7b7; border-top: 1px solid #fbfbfb; }
.tool { width: 35px; flex: none; display: flex; justify-content: center; }
.sep { width: 3px; height: 30px; flex: none; border-left: 1px solid #b2b2b2; }
.grip { width: 7px; height: 30px; flex: none; }
.grip, .hgrip, .vsplit, .dockhead > i, .hsplit i { background-image: radial-gradient(circle at 1px 1px, #bdbdbd 0 1px, transparent 1.300px), radial-gradient(circle at 3.500px 3.500px, #cdcdcd 0 1px, transparent 1.300px); background-size: 5px 5px; }
.g2 { margin: 0 -1px 0 7px; }
.g3 { margin: 0 0 0 7px; }
.g4 { margin: 0 0 0 6px; width: 8px; }
.one { font: bold 8px "DejaVu Sans Condensed", sans-serif; fill: #333; }
.combo { display: flex; background: #fff; border: 1px solid #999; border-radius: 2px; }
.combo span { flex: 1; }
.combo i { border-left: 1px solid #999; display: flex; align-items: center; justify-content: center; background: linear-gradient(#fdfdfd, #e6e6e6); }
.pagecombo { width: 66px; height: 30px; border: 2px solid #929292; background: #f1f1f1; color: #888; flex: none; margin: 0 1px 0 1px; }
.pagecombo span { padding: 7px 0 0 4px; }
.pagecombo i { width: 16px; }

.work { height: 569px; flex: none; display: flex; }
.tools { width: 39px; flex: none; border-right: 1px solid #b5b5b5; padding: 5px 0 0 3px; display: flex; flex-direction: column; margin-right: 1px; }
.hgrip { width: 30px; height: 6px; margin: 0 0 0 2px; flex: none; }
.tools b { height: 34px; width: 34px; flex: none; display: flex; align-items: center; justify-content: center; }
.tools .on { background: #d3d3d3; border: 1px solid #8f8f8f; border-radius: 3px; }
.hsep { height: 2px; margin: 0 3px 1px 1px; background: #bbb; flex: none; }
.tee { font: 15px "Liberation Serif", serif; fill: #444; }
.canvas { width: 802px; flex: none; }
.vsplit { width: 4px; margin: 189px 1px 190px 1px; flex: none; }
.rule text { font: 11px "DejaVu Sans Condensed", sans-serif; }
.grid text { font: bold 5.500px "DejaVu Sans", sans-serif; letter-spacing: 0; }
.leg text { font: 9px "Open Sans", sans-serif; letter-spacing: 0; }
.leg .big { font-size: 12px; }
.scale text { font: 9px "Open Sans", sans-serif; letter-spacing: 0; }
.area path { stroke-width: 1; stroke-opacity: .65; stroke-dasharray: 1.500 2; }
.isle path { stroke: #6a6250; stroke-width: 1; stroke-opacity: .8; }
.sub { fill: none; stroke: #4d4d4d; stroke-width: 1.100; stroke-opacity: .7; stroke-dasharray: 1.500 2.500; }
.county { fill: none; stroke: #292920; stroke-width: 1.400; stroke-opacity: .8; }

.dock { flex: 1; min-width: 0; display: flex; flex-direction: column; }
.tabs { display: flex; align-items: flex-end; border-bottom: 1px solid #b4b4b4; flex: none; padding-left: 1px; }
.top { height: 20px; }
.low { height: 20px; padding-left: 1px; }
.tab { height: 17px; border: 1px solid #aaa; border-bottom: 0; border-radius: 3px 3px 0 0; background: linear-gradient(#f6f6f6, #d9d9d9); display: flex; align-items: center; justify-content: center; white-space: nowrap; }
.tab.cur { height: 20px; background: #f0f0f0; margin-bottom: -1px; }
.t1 { width: 50px; padding-right: 2px; } .t2 { width: 106px; } .t3 { width: 80px; padding-right: 2px; } .t4 { width: 98px; } .t5 { width: 102px; }
.dockhead { height: 22px; display: flex; align-items: center; font-size: 10px; padding: 0 2px 0 4px; flex: none; letter-spacing: -.3px; }
.dockhead > i { height: 5px; flex: 1; }
.dockhead span { width: 39px; text-align: center; white-space: nowrap; }
.second span { width: 86px; }
.dockhead button { width: 13px; height: 13px; padding: 1px; border: 1px solid #888; border-radius: 2px; background: #fafafa; margin: 0 0 0 5px; }
.tree { height: 136px; flex: none; border: 2px solid #b8b8b8; background: #fff; margin-left: 1px; margin-right: -1px; }
.thead { height: 23px; display: flex; background: linear-gradient(#fbfbfb, #dfdfdf); border-bottom: 1px solid #888; }
.thead span { border-right: 2px solid #8b8b8b; display: flex; align-items: center; }
.thead .c1 { width: 30px; padding-right: 6px; justify-content: center; }
.thead .c1:first-child { width: 29px; }
.thead .c3 { flex: 1; padding-left: 2px; margin-right: 1px; border-right-width: 1px; }
.trow { height: 13px; display: flex; line-height: 15px; }
.cb { width: 13px; height: 13px; border: 1px solid #c1c1c1; background: #fafafa; display: block; flex: none; }
.trow .cb { margin-left: 2px; }
.trow .k2 { margin: 0 16px 0 17px; }
.hsplit { height: 6px; flex: none; display: flex; justify-content: center; align-items: center; }
.hsplit i { width: 138px; height: 3px; margin-right: 8px; }
.sect { height: 18px; background: #c6c6c6; font: bold 11px/17px "DejaVu Sans Condensed", sans-serif; padding-left: 5px; flex: none; }
.scroll { flex: 1; min-height: 0; margin-left: 1px; border: 1px solid #b4b4b4; display: flex; overflow: hidden; }
.props { flex: 1; padding: 0 11px; }
.group { height: 68px; border: 1px solid #b4b4b4; border-top: 0; border-radius: 0 0 3px 3px; padding: 1px 0 0 12px; }
.btns { display: flex; gap: 3px; }
.btns b { width: 30px; height: 29px; border: 1px solid #8b8b8b; border-radius: 3px; background: linear-gradient(#fdfdfd, #e9e9e9); display: flex; align-items: center; justify-content: center; flex: none; }
.btns .drop { width: 13px; margin-left: -3px; }
.sigma { font: bold 22px/26px "Liberation Serif", serif; color: #888; }
.eps { color: #888; font: bold 18px "Liberation Serif", serif; }
.eps svg { margin: 10px 0 0 1px; }
.only { display: flex; align-items: center; gap: 4px; margin-top: 9px; }
.fold { height: 26px; display: flex; align-items: center; font: bold 11px/14px "DejaVu Sans Condensed", sans-serif; color: #333; position: relative; top: 2px; }
.fold em { width: 8px; height: 11px; margin: 0 9px 0 4px; background: #333; clip-path: polygon(0 0, 100% 50%, 0 100%); }
.fold .open { width: 12px; height: 7px; margin: 0 6px 0 2px; clip-path: polygon(0 0, 100% 0, 50% 100%); }
.fold u { flex: 1; border-top: 1px solid #888; margin: -4px 0 0 7px; }
.rot { height: 36px; }
.frame { height: 26px; top: 1px; }
.frame u { border-color: #b4b4b4; margin-left: 5px; }
.focus { border: 1px dotted #222; margin-left: 6px; height: 13px; line-height: 11px; padding-right: 1px; }
.framebox { border: 1px solid #b4b4b4; border-width: 0 1px; height: 60px; padding: 3px 0 0 9px; }
.frow { display: flex; height: 22px; }
.frow span { width: 62px; line-height: 22px; white-space: nowrap; }
.swatch { width: 108px; border: 1px solid #888; border-radius: 3px; padding: 2px 4px; background: #f8f8f8; }
.swatch i { display: block; height: 16px; background: #000; border-radius: 2px; }
.frow .drop { width: 12px; border: 1px solid #888; border-radius: 3px; display: flex; align-items: center; justify-content: center; background: #f8f8f8; }
.spin { margin: 7px 0 0 62px; width: 307px; height: 20px; border: 1px solid #aaa; background: #fff; display: flex; justify-content: flex-end; }
.spin i { width: 17px; border-left: 1px solid #aaa; background: #f3f3f3; padding: 1px 4px; }
.bar { width: 16px; display: flex; flex-direction: column; margin-right: 1px; }
.sb { height: 16px; border: 1px solid #888; border-radius: 2px; background: #f8f8f8; display: flex; align-items: center; justify-content: center; flex: none; }
.track { height: 105px; flex: none; background: #f5f5f5; border: 1px dotted #ccc; border-width: 0 1px; }
.track.t { flex: 1; }
.thumb { height: 70px; flex: none; border: 1px solid #888; background: linear-gradient(90deg, #fdfdfd, #e6e6e6); display: flex; align-items: center; justify-content: center; }
.thumb i { width: 11px; height: 20px; background: radial-gradient(circle at 1px 1px, #b0b0b0 1px, transparent 1.200px) 0 0 / 4px 4px; }

.status { height: 26px; flex: none; display: flex; align-items: center; padding-left: 2px; letter-spacing: -.25px; }
.s1 { width: 106px; } .s2 { width: 105px; } .s3 { width: 107px; }
.zoomcombo { width: 100px; height: 20px; }
.zoomcombo span { padding: 3px 4px; }
.zoomcombo i { width: 16px; }
.taskbar { height: 40px; flex: none; background: #000; display: flex; color: #fff; font: 12px/16px "Noto Sans", sans-serif; }
.tb { width: 48px; display: flex; align-items: center; justify-content: center; }
.files { width: 40px; margin: 0 5px 0 6px; border-bottom: 2px solid #a2d45e; }
.app { background: #333; border-bottom: 2px solid #a2d45e; border-right: 3px solid #222; }
.tray { margin-left: auto; display: flex; align-items: center; }
.lang { margin-left: 8px; letter-spacing: -.3px; }
.clock { width: 84px; text-align: center; line-height: 17px; margin: 0 2px 0 5px; padding-right: 0; border-right: 1px solid #666; letter-spacing: -.3px; }
```
